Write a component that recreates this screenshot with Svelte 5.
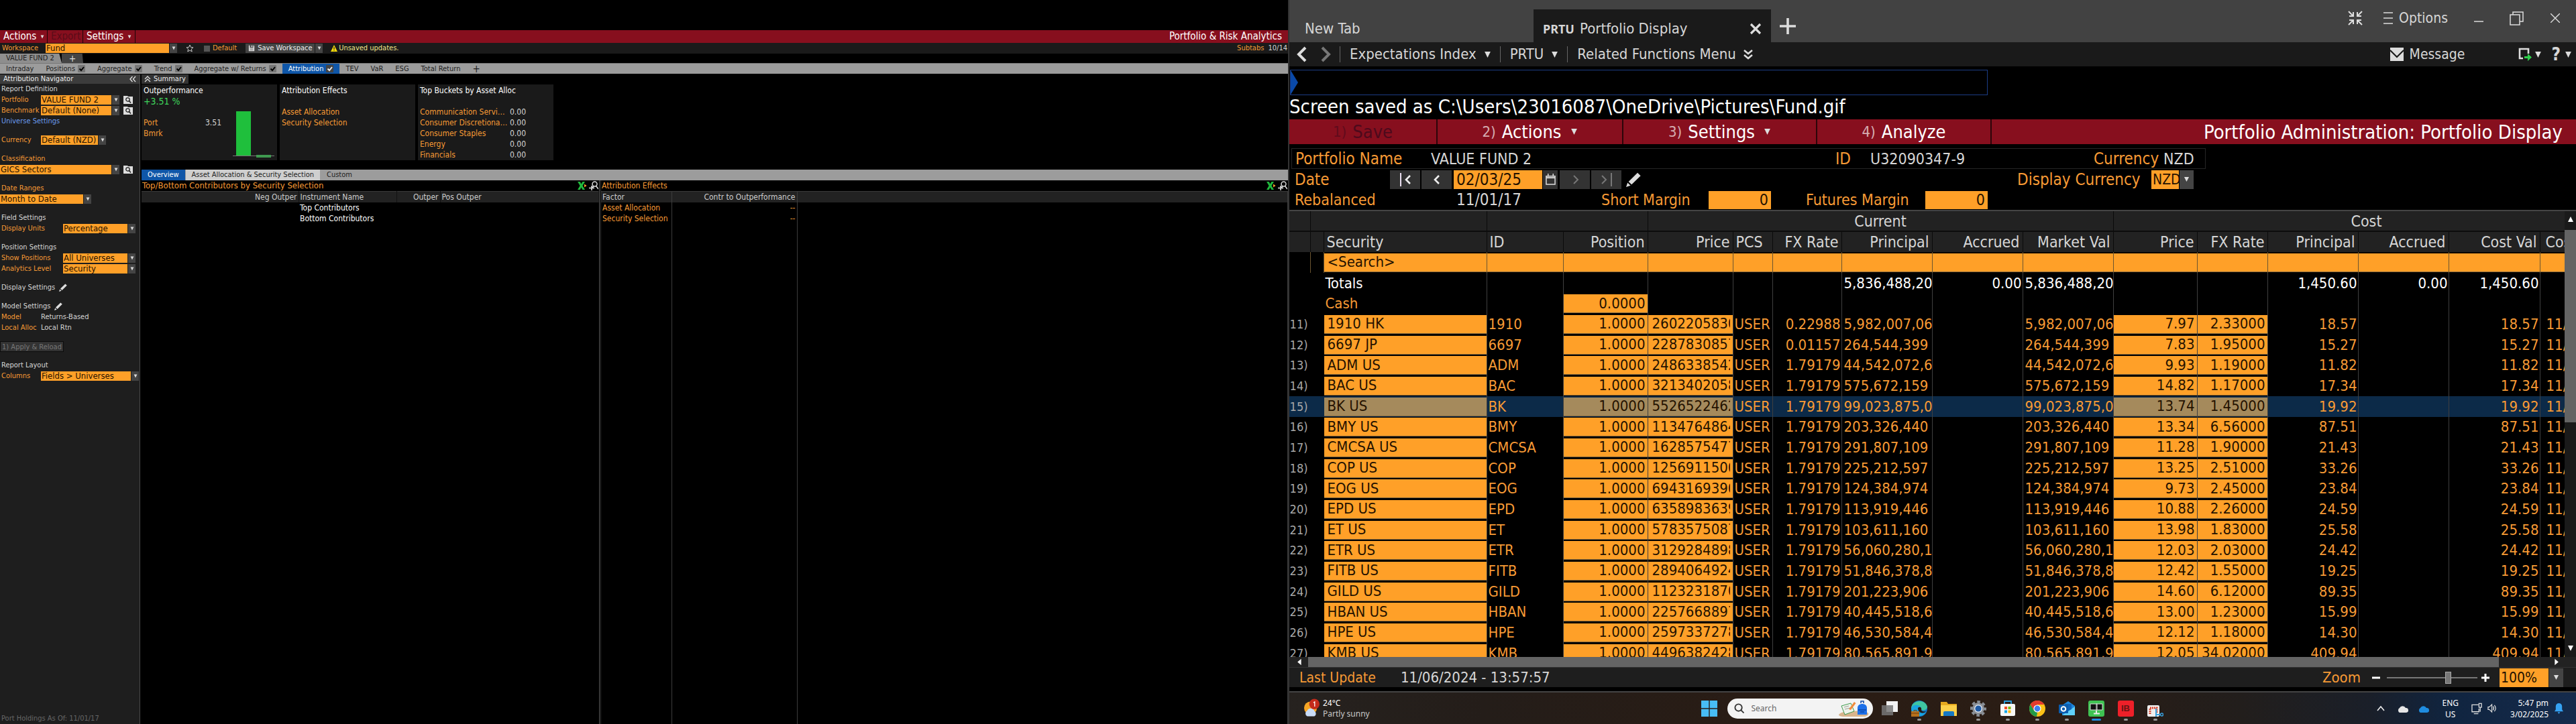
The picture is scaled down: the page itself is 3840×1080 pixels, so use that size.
<script>
  const subtabs = [
    { name: 'Positions', check: true }, { name: 'Aggregate', check: true }, { name: 'Trend', check: true },
    { name: 'Aggregate w/ Returns', check: true }, { name: 'Attribution', check: true, active: true },
    { name: 'TEV' }, { name: 'VaR' }, { name: 'ESG' }, { name: 'Total Return' }
  ];
  const buckets = ['Communication Servi…', 'Consumer Discretiona…', 'Consumer Staples', 'Energy', 'Financials'];
  const columns = [
    ['', 31], ['', 20], ['Security', 243, 'l'], ['ID', 114, 'l'], ['Position', 126], ['Price', 127], ['PCS', 59, 'l'],
    ['FX Rate', 103], ['Principal', 135], ['Accrued', 135], ['Market Val', 135], ['Price', 125], ['FX Rate', 105],
    ['Principal', 135], ['Accrued', 135], ['Cost Val', 136], ['Cos', 37, 'l']
  ];
  const holdings = [
    ['1910 HK', '1910', '2602205830', '0.22988', '5,982,007,06', '7.97', '2.33000', '18.57'],
    ['6697 JP', '6697', '2287830857', '0.01157', '264,544,399', '7.83', '1.95000', '15.27'],
    ['ADM US', 'ADM', '2486338542', '1.79179', '44,542,072,6', '9.93', '1.19000', '11.82'],
    ['BAC US', 'BAC', '3213402058', '1.79179', '575,672,159', '14.82', '1.17000', '17.34'],
    ['BK US', 'BK', '5526522462', '1.79179', '99,023,875,0', '13.74', '1.45000', '19.92'],
    ['BMY US', 'BMY', '1134764864', '1.79179', '203,326,440', '13.34', '6.56000', '87.51'],
    ['CMCSA US', 'CMCSA', '1628575477', '1.79179', '291,807,109', '11.28', '1.90000', '21.43'],
    ['COP US', 'COP', '1256911500', '1.79179', '225,212,597', '13.25', '2.51000', '33.26'],
    ['EOG US', 'EOG', '6943169390', '1.79179', '124,384,974', '9.73', '2.45000', '23.84'],
    ['EPD US', 'EPD', '6358983639', '1.79179', '113,919,446', '10.88', '2.26000', '24.59'],
    ['ET US', 'ET', '5783575087', '1.79179', '103,611,160', '13.98', '1.83000', '25.58'],
    ['ETR US', 'ETR', '3129284898', '1.79179', '56,060,280,1', '12.03', '2.03000', '24.42'],
    ['FITB US', 'FITB', '2894064924', '1.79179', '51,846,378,8', '12.42', '1.55000', '19.25'],
    ['GILD US', 'GILD', '1123231870', '1.79179', '201,223,906', '14.60', '6.12000', '89.35'],
    ['HBAN US', 'HBAN', '2257668897', '1.79179', '40,445,518,6', '13.00', '1.23000', '15.99'],
    ['HPE US', 'HPE', '2597337278', '1.79179', '46,530,584,4', '12.12', '1.18000', '14.30'],
    ['KMB US', 'KMB', '4496382428', '1.79179', '80,565,891,9', '12.05', '34.02000', '409.94']
  ];
</script>

{#snippet tri(big)}<svg class="tri" class:big viewBox="0 0 10 10" aria-hidden="true"><path d="M1 1h8L5 9z" /></svg>{/snippet}
{#snippet drop()}<span class="drop" aria-hidden="true">{@render tri(false)}</span>{/snippet}
{#snippet combo(id, value, size)}<span class="combo {size}"><select {id} aria-label={value}><option>{value}</option></select>{@render drop()}</span>{/snippet}
{#snippet find()}<button class="ico find" aria-label="Browse"><svg viewBox="0 0 14 12"><path d="M0 0h6l1 1h7v11H0z" fill="#ddd" /><circle cx="6.5" cy="5.5" r="2.7" fill="none" stroke="#222" stroke-width="1.3" /><path d="M8.5 7.5 11 10.5" stroke="#222" stroke-width="1.6" /></svg></button>{/snippet}
{#snippet pencil()}<button class="ico pen" aria-label="Edit"><svg viewBox="0 0 12 12"><path d="M0 12 1.2 8.4 3.6 10.8zM2 7.6 9.3.4 11.8 2.8 4.5 10z" fill="#ddd" /></svg></button>{/snippet}
{#snippet gridtools()}<button class="ico tool" aria-label="Export to spreadsheet"><svg viewBox="0 0 14 14"><path d="M0 1h3.600L5.500 4.500 7.400 1H11L7.400 7 11 13H7.400L5.500 9.500 3.600 13H0l3.600-6z" fill="#20b83c" /><path d="M10 4.500 13.500 7 10 9.500z" fill="#f79a2e" /></svg></button><button class="ico tool" aria-label="Zoom in"><svg viewBox="0 0 14 14"><circle cx="8.500" cy="4.500" r="3.500" fill="none" stroke="#ddd" stroke-width="1.500" /><path d="M10.500 7.500 14 12M7 8 5 9.500M4 7v7M0 10.500h8" fill="none" stroke="#ddd" stroke-width="1.600" /></svg></button>{/snippet}

<main>
  <section class="risk" aria-label="Portfolio and Risk Analytics">
    <header class="menu">
      <button class="m1">Actions {@render tri(false)}</button><button class="m2" disabled>Export</button><button class="m3">Settings {@render tri(false)}</button>
      <h1>Portfolio &amp; Risk Analytics</h1>
    </header>
    <div class="toolbar">
      <label for="ws">Workspace</label>{@render combo('ws', 'Fund', 'w-ws')}
      <button class="ico star" aria-label="Favourite"><svg viewBox="0 0 12 12"><path d="M6 1 7.500 4.500 11 4.800 8.300 7.200 9.200 11 6 9 2.800 11 3.700 7.200 1 4.800 4.500 4.500z" fill="none" stroke="#ccc" /></svg></button>
      <label class="default"><input type="checkbox" />Default</label>
      <button class="save"><svg viewBox="0 0 12 12" aria-hidden="true"><path d="M1 1h2v4h6V1h1l1 1v9H1z" fill="#ddd" /><path d="M5 1h3v3H5zM3 7h6M3 9h6" fill="#ddd" stroke="#444" stroke-width=".6" /></svg>Save Workspace</button>{@render drop()}
      <span class="warn"><svg viewBox="0 0 12 12" aria-hidden="true"><path d="M6 0 12 12H0z" fill="#f5d90a" /><path d="M6 4v4M6 9.200v1.400" stroke="#222" stroke-width="1.500" /></svg>Unsaved updates.</span>
      <span class="count"><b>Subtabs</b> 10/14</span>
    </div>
    <div class="filetabs"><button class="ft">VALUE FUND 2</button><button class="ft add" aria-label="Add tab">+</button></div>
    <nav class="subtabs">
      <button>Intraday</button>
      {#each subtabs as t}
        <button class:active={t.active}>{t.name}{#if t.check}<svg class="chk" viewBox="0 0 11 11" aria-hidden="true"><rect width="11" height="11" rx="1" fill={t.active ? '#444' : '#777'} /><path d="M2.500 5.500 5 8l4-5" fill="none" stroke={t.active ? '#eee' : '#000'} stroke-width="2" /></svg>{/if}</button>
      {/each}
      <button class="plus" aria-label="Add subtab">+</button>
    </nav>

    <div class="body">
      <aside>
        <h2>Attribution Navigator<button class="ico fold" aria-label="Collapse"><svg viewBox="0 0 10 10"><path d="M4.500 1 1 5l3.500 4M9 1 5.500 5 9 9" fill="none" stroke="#ddd" stroke-width="1.400" /></svg></button></h2>
        <div class="sections">
          <div>
            <p class="pale">Report Definition</p>
            <p><label class="k" for="pf">Portfolio</label>{@render combo('pf', 'VALUE FUND 2', 'w-m')}{@render find()}</p>
            <p><label class="k" for="bm">Benchmark</label>{@render combo('bm', 'Default (None)', 'w-m')}{@render find()}</p>
            <p><a href="#universe">Universe Settings</a></p>
          </div>
          <div><p><label class="k" for="cur">Currency</label>{@render combo('cur', 'Default (NZD)', 'w-s')}</p></div>
          <div><p><label for="cls">Classification</label></p><p class="edge">{@render combo('cls', 'GICS Sectors', 'w-l')}{@render find()}</p></div>
          <div><p><label for="dr">Date Ranges</label></p><p class="edge">{@render combo('dr', 'Month to Date', 'w-d')}</p></div>
          <div><p class="pale">Field Settings</p><p><label class="k wide" for="du">Display Units</label>{@render combo('du', 'Percentage', 'w-p')}</p></div>
          <div>
            <p class="pale">Position Settings</p>
            <p><label class="k wide" for="sp">Show Positions</label>{@render combo('sp', 'All Universes', 'w-p')}</p>
            <p><label class="k wide" for="al">Analytics Level</label>{@render combo('al', 'Security', 'w-p')}</p>
          </div>
          <div><p class="pale">Display Settings {@render pencil()}</p></div>
          <div>
            <p class="pale">Model Settings {@render pencil()}</p>
            <p><span class="k">Model</span><span class="pale">Returns-Based</span></p>
            <p><span class="k">Local Alloc</span><span class="pale">Local Rtn</span></p>
          </div>
          <div><button class="apply" disabled>1) Apply &amp; Reload</button></div>
          <div><p class="pale">Report Layout</p><p><label class="k" for="co">Columns</label>{@render combo('co', 'Fields > Universes', 'w-c')}</p></div>
        </div>
        <p class="asof">Port Holdings As Of: 11/01/17</p>
      </aside>

      <div class="report">
        <button class="sumtab"><svg viewBox="0 0 10 10" aria-hidden="true"><path d="M1 5 5 1l4 4M1 9l4-4 4 4" fill="none" stroke="#ddd" stroke-width="1.300" /></svg>Summary</button>
        <div class="cards">
          <article>
            <div class="perf"><h3>Outperformance</h3><p class="gain">+3.51 %</p><dl><dt>Port</dt><dd>3.51</dd><dt>Bmrk</dt><dd></dd></dl></div>
            <svg class="bars" viewBox="0 0 64 76" aria-hidden="true"><path d="M1 70.500h62" stroke="#777" /><path d="M6 4h22v66H6z" fill="#1fbf3c" /><path d="M36 69h22v4H36z" fill="#3f9a50" /></svg>
          </article>
          <article><div><h3>Attribution Effects</h3><p></p><p>Asset Allocation</p><p>Security Selection</p></div></article>
          <article><div><h3>Top Buckets by Asset Alloc</h3><p></p><dl class="bk">{#each buckets as b}<dt>{b}</dt><dd>0.00</dd>{/each}</dl></div></article>
        </div>
        <nav class="views"><button class="active">Overview</button><button class="light">Asset Allocation &amp; Security Selection</button><button>Custom</button></nav>
        <div class="grids">
          <div class="contrib">
            <div class="gt"><h3>Top/Bottom Contributors by Security Selection</h3>{@render gridtools()}</div>
            <table class="small">
              <colgroup><col class="c1" /><col class="c2" /><col class="c3" /><col /></colgroup>
              <thead><tr><th class="r">Neg Outper</th><th>Instrument Name</th><th class="r">Outper</th><th>Pos Outper</th></tr></thead>
              <tbody><tr><td></td><td>Top Contributors</td><td></td><td></td></tr><tr><td></td><td>Bottom Contributors</td><td></td><td></td></tr></tbody>
            </table>
          </div>
          <div class="effects">
            <div class="gt"><h3>Attribution Effects</h3>{@render gridtools()}</div>
            <table class="small lined">
              <colgroup><col class="c4" /><col class="c5" /><col /></colgroup>
              <thead><tr><th>Factor</th><th class="r">Contr to Outperformance</th><th></th></tr></thead>
              <tbody><tr><td>Asset Allocation</td><td class="r">--</td><td></td></tr><tr><td>Security Selection</td><td class="r">--</td><td></td></tr><tr class="fill"><td></td><td></td><td></td></tr></tbody>
            </table>
          </div>
        </div>
      </div>
    </div>
  </section>

  <section class="display" aria-label="Portfolio Display">
    <header class="titlebar">
      <button class="tab plain">New Tab</button>
      <button class="tab on"><b>PRTU</b><span>Portfolio Display</span><svg viewBox="0 0 18 18" aria-hidden="true"><path d="M2 2 16 16M16 2 2 16" stroke="#ddd" stroke-width="3.200" /></svg></button>
      <button class="ico newtab" aria-label="New tab"><svg viewBox="0 0 24 24"><path d="M12 0v24M0 12h24" stroke="#ddd" stroke-width="3.600" /></svg></button>
      <div class="win">
        <button class="ico" aria-label="Shrink"><svg class="s22" viewBox="0 0 22 22"><path d="M1 1 7 7M8 2v6H2M21 1 15 7M14 2v6h6M1 21 7 15M2 14h6v6M21 21 15 15M20 14h-6v6" fill="none" stroke="#ddd" stroke-width="2" /></svg></button>
        <button class="opt"><svg viewBox="0 0 14 20" aria-hidden="true"><path d="M0 2h14M0 10h14M0 18h14" stroke="#ddd" stroke-width="1.600" /></svg>Options</button>
        <button class="ico" aria-label="Minimize"><svg class="s14" viewBox="0 0 14 14"><path d="M0 12h14" stroke="#ddd" stroke-width="1.500" /></svg></button>
        <button class="ico" aria-label="Restore"><svg class="s22" viewBox="0 0 22 22"><path d="M1 6h14v15H1zM5 6V2h15v14h-5" fill="none" stroke="#ddd" stroke-width="1.500" /></svg></button>
        <button class="ico" aria-label="Close"><svg class="s14" viewBox="0 0 14 14"><path d="M0 0 14 14M14 0 0 14" stroke="#ddd" stroke-width="1.400" /></svg></button>
      </div>
    </header>
    <nav class="navbar">
      <button class="ico" aria-label="Back"><svg class="chev" viewBox="0 0 16 24"><path d="M14 2 4 12 14 22" fill="none" stroke="#ddd" stroke-width="4" /></svg></button>
      <button class="ico fwd" aria-label="Forward"><svg class="chev" viewBox="0 0 16 24"><path d="M2 2 12 12 2 22" fill="none" stroke="#777" stroke-width="4" /></svg></button>
      <button class="seg">Expectations Index {@render tri(true)}</button>
      <button class="seg">PRTU {@render tri(true)}</button>
      <button class="seg">Related Functions Menu <svg class="dbl" viewBox="0 0 14 16" aria-hidden="true"><path d="M1 2 7 7l6-5M1 9l6 5 6-5" fill="none" stroke="#ddd" stroke-width="2.500" /></svg></button>
      <button class="msg"><svg viewBox="0 0 20 20" aria-hidden="true"><path d="M0 0h20v20H0z" fill="#ddd" /><path d="M0 4 10 14 20 4" fill="none" stroke="#1a1a1a" stroke-width="2" /></svg>Message</button>
      <button class="ico exp" aria-label="Export"><svg viewBox="0 0 20 20"><path d="M7 16H2V2h13v7" fill="none" stroke="#ddd" stroke-width="2.600" /><path d="M9 13h5V9l6 5.500L14 20v-4H9z" fill="#2fd04c" /></svg>{@render tri(true)}</button>
      <button class="help" aria-label="Help"><b>?</b>{@render tri(true)}</button>
    </nav>
    <div class="cmd"><svg viewBox="0 0 11 38" preserveAspectRatio="none" aria-hidden="true"><path d="M0 0 11 19 0 38z" fill="#0a49a8" /></svg><input aria-label="Command" /></div>
    <p class="notice">Screen saved as C:\Users\23016087\OneDrive\Pictures\Fund.gif</p>
    <div class="redbar">
      <button class="b1" disabled><i>1)</i>Save</button><button class="b2"><i>2)</i>Actions {@render tri(true)}</button><button class="b3"><i>3)</i>Settings {@render tri(true)}</button><button class="b4"><i>4)</i>Analyze</button>
      <h1>Portfolio Administration: Portfolio Display</h1>
    </div>

    <div class="form">
      <div class="fr boxed"><span class="f1">Portfolio Name</span><output class="f2">VALUE FUND 2</output><span class="f3">ID</span><output class="f4">U32090347-9</output><span class="f5">Currency</span><output>NZD</output></div>
      <div class="fr">
        <label class="g1" for="date">Date</label>
        <button class="step" aria-label="First"><svg viewBox="0 0 20 20"><path d="M3 0v20" stroke="#eadff0" stroke-width="2" /><path d="M17 4 11 10l6 6" fill="none" stroke="#eee" stroke-width="2.600" /></svg></button>
        <button class="step" aria-label="Previous"><svg viewBox="0 0 20 20"><path d="M13 4 7 10l6 6" fill="none" stroke="#eee" stroke-width="2.600" /></svg></button>
        <span class="date"><input id="date" value="02/03/25" /><button class="cal" aria-label="Calendar"><svg viewBox="0 0 16 18"><path d="M1 4h14v13H1zM4 0v5M12 0v5" fill="none" stroke="#ddd" stroke-width="1.600" /><path d="M1 6.500h14" stroke="#ddd" stroke-width="2" /></svg></button></span>
        <button class="step" aria-label="Next"><svg viewBox="0 0 20 20"><path d="M8 4 14 10 8 16" fill="none" stroke="#777" stroke-width="2" /></svg></button>
        <button class="step" aria-label="Last"><svg viewBox="0 0 20 20"><path d="M3 4 9 10 3 16M17 0v20" fill="none" stroke="#777" stroke-width="2" /></svg></button>
        <button class="ico edit" aria-label="Edit date"><svg viewBox="0 0 12 12"><path d="M0 12 1.200 8.400 3.600 10.800zM2 7.600 9.300.4 11.800 2.800 4.500 10z" fill="#ddd" /></svg></button>
        <label class="dc" for="dcur">Display Currency</label>
        <span class="bigsel nzd"><select id="dcur"><option>NZD</option></select><span class="bigdrop">{@render tri(false)}</span></span>
      </div>
      <div class="fr">
        <span class="g2">Rebalanced</span><output class="g3">11/01/17</output>
        <label class="g4" for="sm">Short Margin</label><input class="mar" id="sm" value="0" />
        <label class="g5" for="fm">Futures Margin</label><input class="mar" id="fm" value="0" />
      </div>
    </div>

    <div class="holdwrap">
      <div class="clip">
        <table class="hold">
          <colgroup>{#each columns as c}<col style="width:{c[1]}px" />{/each}</colgroup>
          <thead>
            <tr class="grp"><th></th><th colspan="2"></th><th colspan="2"></th><th colspan="6">Current</th><th class="cost" colspan="6">Cost</th></tr>
            <tr>{#each columns as c}<th class={c[2]}>{c[0]}</th>{/each}</tr>
          </thead>
          <tbody>
            <tr class="search"><td></td><td></td>{#each columns.slice(2) as c, i}<td><input aria-label="Filter {c[0]}" value={i === 0 ? '<Search>' : ''} /></td>{/each}</tr>
            <tr class="tot"><td></td><td></td><td class="l">Totals</td><td></td><td></td><td></td><td></td><td></td><td class="cut">5,836,488,20</td><td>0.00</td><td class="cut">5,836,488,20</td><td></td><td></td><td>1,450.60</td><td>0.00</td><td>1,450.60</td><td></td></tr>
            <tr><td></td><td></td><td class="l">Cash</td><td></td><td class="e"><input aria-label="Cash position" value="0.0000" /></td><td></td><td></td><td></td><td></td><td></td><td></td><td></td><td></td><td></td><td></td><td></td><td></td></tr>
            {#each holdings as h, i}
              <tr class:sel={i === 4}>
                <td class="n">{i + 11})</td><td></td>
                <td class="e sec"><input aria-label="Security" value={h[0]} /></td><td class="l">{h[1]}</td>
                <td class="e"><input aria-label="Position" value="1.0000" /></td><td class="e pr"><input aria-label="Price" value={h[2]} /></td>
                <td class="l">USER</td><td>{h[3]}</td><td class="cut">{h[4]}</td><td></td><td class="cut">{h[4]}</td>
                <td class="e"><input aria-label="Cost price" value={h[5]} /></td><td class="e"><input aria-label="Cost FX rate" value={h[6]} /></td>
                <td>{h[7]}</td><td></td><td>{h[7]}</td><td class="last">11/</td>
              </tr>
            {/each}
          </tbody>
        </table>
      </div>
      <div class="vbar" aria-hidden="true"><svg viewBox="0 0 10 10"><path d="M5 1 9 9H1z" fill="#fff" /></svg><span></span><svg viewBox="0 0 10 10"><path d="M1 1h8L5 9z" fill="#fff" /></svg></div>
    </div>
    <div class="hbar" aria-hidden="true"><svg viewBox="0 0 10 14"><path d="M9 1v12L2 7z" fill="#fff" /></svg><span></span><svg viewBox="0 0 10 14"><path d="M1 1v12l7-6z" fill="#fff" /></svg></div>
    <footer class="status">
      <span class="lu">Last Update</span><output>11/06/2024 - 13:57:57</output>
      <label class="zl" for="zoom">Zoom</label>
      <button class="ico" aria-label="Zoom out"><svg class="s12" viewBox="0 0 12 12"><path d="M0 6h12" stroke="#fff" stroke-width="3" /></svg></button>
      <input id="zoom" type="range" min="0" max="100" value="69" />
      <button class="ico" aria-label="Zoom in"><svg class="s12" viewBox="0 0 12 12"><path d="M0 6h12M6 0v12" stroke="#fff" stroke-width="3" /></svg></button>
      <span class="bigsel pct"><select aria-label="Zoom level"><option>100%</option></select><span class="bigdrop">{@render tri(false)}</span></span>
    </footer>

    <div class="taskbar">
      <button class="weather">
        <svg viewBox="0 0 26 30" aria-hidden="true"><circle cx="12" cy="14" r="10" fill="#f5a524" /><path d="M7 27a5 5 0 0 1 0-9 6 6 0 0 1 11 1 4.500 4.500 0 0 1 0 8z" fill="#c9dcf7" /><circle cx="18" cy="8" r="8" fill="#c42b1c" /><path d="M16.500 6 18.500 4.500V12" fill="none" stroke="#fff" stroke-width="1.300" /></svg>
        <span>24°C<br /><em>Partly sunny</em></span>
      </button>
      <div class="apps">
        <button class="ico" aria-label="Start"><svg viewBox="0 0 24 24"><path d="M0 0h11.300v11.300H0zM12.700 0H24v11.300H12.700zM0 12.700h11.300V24H0zM12.700 12.700H24V24H12.700z" fill="#48bdf5" /></svg></button>
        <label class="find-box">
          <svg class="mag" viewBox="0 0 16 16" aria-hidden="true"><circle cx="7" cy="7" r="5.500" fill="none" stroke="#333" stroke-width="2" /><path d="M11 11 15.500 15.500" stroke="#333" stroke-width="2" /></svg>
          <input placeholder="Search" aria-label="Search" />
          <svg class="art" viewBox="0 0 46 26" aria-hidden="true"><path d="M0 22c4-5 12-4 20-5 10-1 20-2 24 3 1 2-1 4-5 5H8c-5 0-8-1-8-3z" fill="#d8b48c" /><path d="M4 9 18 5l5 12-14 5z" fill="#eef3ea" stroke="#3f9a50" /><path d="M8 11 15 9M9 14l8-2" stroke="#999" /><path d="M15 14 23 3l2.500 2L18 15z" fill="#f08a3c" /><path d="M28 12c0-8 14-8 14 0v10H28z" fill="#1c6fe8" /><path d="M33 5V2h4v3M29 15h12M32 18h6" fill="none" stroke="#0b48ab" stroke-width="1.500" /></svg>
        </label>
        <button class="ico" aria-label="Task view"><svg viewBox="0 0 24 24"><path d="M7 1h17v16H7z" fill="#f2f2f2" /><path d="M0 7h17v15H0z" fill="#777" opacity=".85" /></svg></button>
        <button class="ico run" aria-label="Edge"><svg viewBox="0 0 24 24"><circle cx="12" cy="12" r="12" fill="#1478c8" /><path d="M0 12C0 0 20-4 24 9c0 6-8 7-9 4 1-5-9-7-15-1z" fill="#3fc6a0" /><path d="M0 12C2 5 12 5 14 10c-5 0-6 8 2 9l6-1c-7 9-22 6-22-6z" fill="#1aa4e0" /><path d="M10 11c3-3 6 0 5 3 0 2 4 3 7 2-4 5-12 2-12-5z" fill="#241a14" /><path d="M0 16h12v8H0z" fill="#b8701c" /><path d="M0 19h12M4 16v-1.500h4V16" fill="none" stroke="#704010" /></svg></button>
        <button class="ico" aria-label="Files"><svg viewBox="0 0 24 24"><path d="M0 2h9l2 3h13v18H0z" fill="#e5a81e" /><path d="M0 7h24v16H0z" fill="#fbd04a" /><path d="M4 23v-5q0-2 2-2h12q2 0 2 2v5z" fill="#1579c4" /></svg></button>
        <button class="ico run" aria-label="Settings"><svg viewBox="0 0 24 24"><circle cx="12" cy="12" r="9" fill="#8a8f96" /><circle cx="12" cy="12" r="10" fill="none" stroke="#8a8f96" stroke-width="4" stroke-dasharray="4.500 3.354" stroke-dashoffset="2" /><circle cx="12" cy="12" r="6" fill="#dfe5ee" /><circle cx="12" cy="12" r="4.600" fill="#1f5aa5" /></svg></button>
        <button class="ico run" aria-label="Store"><svg viewBox="0 0 24 24"><path d="M7 6V1h10v5" fill="none" stroke="#2a9fe0" stroke-width="1.800" /><rect y="5" x="1" width="22" height="18" rx="2" fill="#f6f6f6" /><path d="M7 9h4v4H7z" fill="#f04e23" /><path d="M12.500 9h4v4h-4z" fill="#80bb0a" /><path d="M7 14.500h4v4H7z" fill="#0ea5e9" /><path d="M12.500 14.500h4v4h-4z" fill="#fbb606" /></svg></button>
        <button class="ico run" aria-label="Chrome"><svg viewBox="0 0 24 24"><circle cx="12" cy="12" r="12" fill="#fbc116" /><path d="M1.600 6A12 12 0 0 1 22.400 6H12l-5 9z" fill="#e33b2e" /><path d="M1.600 6 7 15l5 3-1 6A12 12 0 0 1 1.600 6z" fill="#219a48" /><circle cx="12" cy="12" r="5.600" fill="#fff" /><circle cx="12" cy="12" r="4.400" fill="#3e7ef0" /></svg></button>
        <button class="ico run" aria-label="Outlook"><svg viewBox="0 0 24 24"><path d="M5 7 14 1l10 7v14H5z" fill="#1b86dc" /><path d="M5 22 24 9v13z" fill="#5fd0fa" /><path d="M9 5h10v8l-6 3z" fill="#0f63b8" /><rect y="6" width="14" height="13" rx="1" fill="#0b5cad" /><circle cx="7" cy="12.500" r="3.300" fill="none" stroke="#fff" stroke-width="2" /></svg></button>
        <button class="ico now" aria-label="Terminal"><svg viewBox="0 0 24 24"><rect width="24" height="24" rx="3" fill="#3fc252" /><path d="M3 5h10v9H3zM12 5h9v9h-9z" fill="#111" stroke="#ddd" /><path d="M12 15v4M8 19.500h9" stroke="#eee" stroke-width="2" /></svg></button>
        <button class="ico run ib" aria-label="IB">IB</button>
        <button class="ico run" aria-label="Snipping Tool"><svg viewBox="0 0 24 24"><rect y="7" width="18" height="17" rx="2" fill="#eee" /><path d="M4 20v-9h10v7" fill="none" stroke="#d8432b" stroke-width="3" stroke-dasharray="2 1" /><path d="M13 12v12M12 21h8" stroke="#3aa0dd" stroke-width="2" /><circle cx="21.500" cy="21" r="2" fill="none" stroke="#3aa0dd" stroke-width="1.500" /></svg></button>
      </div>
      <div class="tray">
        <svg class="t12" viewBox="0 0 12 12" aria-hidden="true"><path d="M1 9 6 3l5 6" fill="none" stroke="#eee" stroke-width="1.600" /></svg>
        <svg class="t18" viewBox="0 0 18 12" aria-hidden="true"><path d="M4 12a4 4 0 0 1 0-7 5 5 0 0 1 9 0 3.500 3.500 0 0 1 1 7z" fill="#e6e6e6" /></svg>
        <svg class="t18" viewBox="0 0 18 12" aria-hidden="true"><path d="M4 12a4 4 0 0 1 0-7 5 5 0 0 1 9 0 3.500 3.500 0 0 1 1 7z" fill="#1f8de0" /></svg>
        <span class="lang">ENG<br />US</span>
        <svg class="t18 mon" viewBox="0 0 18 18" aria-hidden="true"><path d="M11 3H1v11h11V9M4 17h7M12 1h4v6h-4zM14 7v7" fill="none" stroke="#ddd" stroke-width="1.400" /></svg>
        <svg class="t16" viewBox="0 0 16 16" aria-hidden="true"><path d="M1 6h2l4-4v12l-4-4H1zM9 5q2 3 0 6M11 3q4 5 0 10" fill="none" stroke="#ddd" stroke-width="1.300" /></svg>
        <span class="clock">5:47 pm<br />3/02/2025</span>
        <svg class="t16" viewBox="0 0 16 18" aria-hidden="true"><path d="M8 1a5 5 0 0 1 5 5v5l2 3H1l2-3V6a5 5 0 0 1 5-5zM6 15h4l-2 3z" fill="#35a2f3" /></svg>
      </div>
    </div>
  </section>
</main>

<style>
  :global(body) { background: #000; }
  main { --o: #ffa028; --t: #f79a35; --p: #d6d6d6; display: grid; grid-template: minmax(0, 1fr) / minmax(0, 1fr) minmax(0, 1fr); height: 100vh; overflow: hidden; color: var(--p); font-family: "DejaVu Sans Condensed", "DejaVu Sans", sans-serif; }
  * { box-sizing: border-box; }
  button, input, select { font: inherit; color: inherit; border: 0; margin: 0; padding: 0; background: none; border-radius: 0; min-width: 0; white-space: nowrap; }
  select { appearance: none; }
  h1, h2, h3, p, dl, dd { margin: 0; font-weight: 400; font-size: inherit; }
  .ico { display: flex; align-items: center; justify-content: center; flex: none; }
  .tri { width: 6px; height: 6px; fill: #ddd; flex: none; }
  .tri.big { width: 11px; height: 11px; }
  table { border-collapse: collapse; table-layout: fixed; width: 100%; }
  th { font-weight: 400; }

  /* Risk analytics window */
  .risk { display: flex; flex-direction: column; min-height: 0; padding-top: 45px; font-size: 11px; line-height: 16px; }
  .menu { display: flex; height: 19px; background: #870f1e; color: #fff; font-size: 15px; line-height: 19px; }
  .menu button { display: flex; align-items: center; gap: 6px; border-right: 1px solid #1c0507; padding-left: 5px; }
  .m1 { width: 71px; } .m2 { width: 53px; } .m3 { width: 78px; }
  .menu .m2 { color: #5a0c18; }
  .menu h1 { margin-left: auto; padding-right: 9px; }
  .toolbar { display: flex; align-items: center; height: 16px; padding-left: 3px; background: #1a1a1a; color: var(--t); }
  .toolbar > label:first-child { width: 65px; }
  .combo { display: flex; height: 14px; font-size: 13px; line-height: 14px; }
  .combo select { flex: 1; height: 14px; background: var(--o); color: #241200; padding-left: 1px; }
  .drop { display: flex; flex: none; align-items: center; justify-content: center; width: 11px; height: 14px; margin-left: 1px; background: #444; }
  .w-ws { width: 196px; } .w-m { width: 117px; } .w-s { width: 97px; } .w-l { width: 178px; } .w-d { width: 136px; } .w-p { width: 108px; } .w-c { width: 146px; }
  .star { margin-left: 13px; width: 12px; } .star svg { width: 12px; }
  .default { display: flex; align-items: center; gap: 4px; margin-left: 15px; }
  .default input { appearance: none; width: 9px; height: 9px; background: #555; }
  .save { display: flex; align-items: center; gap: 4px; width: 103px; height: 14px; margin-left: 13px; padding-left: 4px; background: #444; color: #eee; }
  .save svg { width: 10px; }
  .warn { display: flex; align-items: center; gap: 2px; margin-left: 12px; color: #f2e58a; } .warn svg { width: 10px; }
  .count { margin-left: auto; padding-right: 1px; color: var(--p); } .count b { color: var(--t); font-weight: 400; margin-right: 3px; }
  .filetabs { display: flex; height: 14px; line-height: 14px; }
  .ft { width: 92px; background: #8e8e8e; color: #1c1c1c; text-align: left; padding-left: 9px; clip-path: polygon(0 0, 96% 0, 100% 100%, 0 100%); }
  .ft.add { width: 32px; background: #444; color: #ddd; text-align: center; padding: 0; font-size: 14px; }
  .subtabs { display: flex; height: 16px; background: #9c9c9c; color: #1c1c1c; border-top: 1px solid #777; }
  .subtabs button { display: flex; align-items: center; gap: 4px; padding: 0 9px; }
  .chk { width: 11px; height: 11px; }
  button.active { background: #0f56a8; color: #fff; }
  .subtabs .plus { font-size: 15px; }
  .body { flex: 1; display: flex; min-height: 0; padding-top: 1px; }
  aside { display: flex; flex-direction: column; width: 208px; flex: none; background: #1e1e1e; color: var(--t); }
  h2 { display: flex; flex: none; justify-content: space-between; height: 14px; line-height: 14px; padding: 0 5px; background: #3c3c3c; color: #eee; }
  .fold svg { width: 10px; height: 10px; }
  .sections { display: grid; gap: 12px; }
  .sections p { display: flex; align-items: center; height: 16px; padding-left: 2px; white-space: nowrap; }
  .sections p.edge { padding-left: 0; }
  .pale { color: var(--p); }
  .k { width: 59px; flex: none; } .k.wide { width: 92px; }
  a { color: #6a9cf0; text-decoration: none; }
  .find { margin-left: 6px; } .find svg { width: 14px; height: 12px; }
  .pen { margin-left: 6px; } .pen svg { width: 12px; height: 12px; }
  .apply { display: block; width: 95px; height: 16px; background: #333; border: 1px solid #0c0c0c; color: #777; line-height: 13px; }
  .asof { margin-top: auto; padding-left: 2px; color: #666; }
  .report { flex: 1; display: flex; flex-direction: column; min-width: 0; border-left: 1px solid #4a4a4a; padding-left: 2px; }
  .sumtab { display: flex; align-items: center; gap: 4px; width: 70px; height: 14px; padding-left: 4px; background: #333; color: #eee; }
  .sumtab svg { width: 10px; height: 10px; }
  .cards { display: flex; gap: 4px; margin-top: 1px; font-size: 12px; }
  article { display: flex; width: 202px; height: 113px; padding: 1px 3px; background: #1a1a1a; color: var(--t); }
  article > div { flex: 1; } article p { height: 16px; } article h3 { color: #fff; white-space: nowrap; }
  article p.gain { color: #3fd65c; font-size: 14px; }
  dl { display: grid; grid-template-columns: 1fr 40px; } .bk { grid-template-columns: 134px 24px; white-space: nowrap; }
  dt, dd { height: 16px; } dd { color: var(--p); text-align: right; }
  .perf { max-width: 117px; } .perf dl { margin-top: 16px; }
  .bars { width: 64px; height: 76px; margin: 35px 0 0 16px; }
  .views { display: flex; height: 16px; margin-top: 14px; background: #9c9c9c; color: #1c1c1c; }
  .views button { padding: 0 9px; margin-right: 1px; } .views .light { background: #cfcfcf; }
  .grids { flex: 1; display: grid; grid-template-columns: 683px minmax(0, 1fr); min-height: 0; }
  .contrib { border-right: 1px solid #555; }
  .effects { display: flex; flex-direction: column; margin-left: 1px; border-left: 1px solid #333; }
  .gt { display: flex; align-items: center; height: 16px; padding-left: 1px; color: var(--t); font-size: 12px; } .gt h3 { flex: 1; font-size: 13px; }
  .effects h3 { font-size: 12px; }
  .tool { width: 17px; } .tool svg { width: 14px; height: 14px; }
  .small { font-size: 12px; } .small tr { height: 16px; }
  .small th, .small td { padding: 0 2px; text-align: left; white-space: nowrap; line-height: 16px; color: #fff; }
  .small th { background: #222; color: #ccc; border-right: 1px solid #111; border-top: 1px solid #3a3a3a; }
  .small .r { text-align: right; }
  .c1 { width: 234px; } .c2 { width: 146px; } .c3 { width: 65px; } .c4 { width: 105px; } .c5 { width: 187px; }
  .lined { flex: 1; height: 100%; } .lined td, .lined th { border-right: 1px solid #3c3c3c; } .lined td { color: var(--t); }
  .lined .fill { height: auto; }

  /* Portfolio display window */
  .display { display: flex; flex-direction: column; min-height: 0; border-left: 2px solid #333; font-size: 22px; }
  .titlebar { display: flex; height: 63px; flex: none; background: #424242; }
  .tab { padding-top: 22px; line-height: 42px; height: 63px; text-align: left; }
  .plain { width: 364px; padding-left: 23px; }
  .on { display: flex; align-items: center; width: 354px; height: 49px; margin-top: 14px; padding: 8px 14px 0; background: #1a1a1a; }
  .on b { font: 700 18px "Noto Sans", sans-serif; width: 55px; } .on span { flex: 1; } .on svg { width: 18px; height: 18px; }
  .newtab { width: 50px; padding-top: 14px; } .newtab svg { width: 24px; height: 24px; }
  .win { display: flex; align-items: center; gap: 39px; height: 54px; margin-left: auto; padding-right: 24px; }
  .s22 { width: 22px; height: 22px; } .s14 { width: 14px; height: 14px; } .s12 { width: 12px; height: 12px; }
  .opt { display: flex; align-items: center; gap: 9px; font-size: 21px; margin-left: -8px; } .opt svg { width: 14px; height: 20px; }
  .navbar { display: flex; align-items: center; height: 36px; flex: none; padding-left: 10px; background: #1a1a1a; }
  .chev { width: 16px; height: 24px; } .fwd { margin: 0 12px 0 21px; }
  .seg { display: flex; align-items: center; gap: 11px; height: 24px; padding: 0 13px 0 14px; border-left: 1px solid #666; line-height: 24px; }
  .dbl { width: 14px; height: 16px; }
  .msg { display: flex; align-items: center; gap: 9px; margin-left: auto; font-size: 21px; } .msg svg { width: 20px; height: 20px; }
  .exp { gap: 4px; margin-left: 80px; } .exp > svg:first-child { width: 20px; height: 22px; }
  .help { display: flex; align-items: center; gap: 6px; margin: 0 6px 0 14px; font-size: 26px; line-height: 30px; }
  .cmd { display: flex; flex: none; width: 55%; max-width: 1040px; height: 38px; margin: 5px 0 0 1px; border: 1px solid #1b3c84; } .cmd svg { width: 11px; } .cmd input { flex: 1; }
  .notice { flex: none; height: 36px; line-height: 35px; font-size: 29px; color: #fff; white-space: nowrap; }
  .redbar { display: flex; align-items: center; height: 37px; flex: none; background: #870f1e; color: #fff; font-size: 27px; line-height: 34px; }
  .redbar button { display: flex; align-items: center; justify-content: center; gap: 9px; height: 37px; border-right: 2px solid #2c0509; }
  .redbar .tri { margin-left: 4px; } .redbar h1 { margin-left: auto; padding-right: 20px; font-size: 29px; white-space: nowrap; }
  .b1 { width: 221px; } .b2 { width: 277px; } .b3 { width: 289px; } .b4 { width: 260px; } .redbar .b1 { color: #4d0a1c; }
  i { font-size: 22px; font-style: normal; opacity: .65; }
  .form { padding-top: 6px; font-size: 23px; color: var(--t); flex: none; }
  .fr { display: flex; align-items: center; height: 30px; padding-left: 8px; line-height: 28px; white-space: nowrap; }
  .boxed, .boxed + .fr { height: 31px; }
  output { color: var(--p); font-size: 22px; }
  .boxed { max-width: 1363px; margin-left: 3px; padding-left: 5px; border: 1px solid #252525; font-size: 24px; }
  .boxed output { font-size: 23px; }
  .f1 { width: 202px; } .f2 { width: 603px; } .f3 { width: 52px; } .f4 { width: 333px; } .f5 { width: 104px; }
  .g1 { width: 142px; font-size: 24px; }
  .step { display: flex; align-items: center; justify-content: center; width: 45px; height: 28px; margin-right: 2px; background: #333; } .step svg { width: 20px; height: 20px; }
  .date { display: flex; width: 155px; height: 28px; margin: 0 3px 0 1px; } .date input { flex: 1; background: var(--o); color: #241200; padding-left: 4px; font-size: 24px; }
  .cal { display: flex; align-items: center; justify-content: center; width: 22px; margin-left: 1px; background: #333; } .cal svg { width: 15px; height: 17px; }
  .edit { margin-left: 5px; } .edit svg { width: 22px; height: 22px; }
  .dc { margin-left: 561px; width: 200px; font-size: 24px; }
  .bigsel { display: flex; height: 28px; color: #241200; } .bigsel select { flex: 1; background: var(--o); padding-left: 2px; font-size: 21px; }
  .nzd { width: 63px; } .pct { width: 95px; }
  .bigdrop { display: flex; flex: none; align-items: center; justify-content: center; width: 21px; margin-left: 1px; background: #444; } .bigdrop .tri { width: 9px; height: 9px; }
  .g2 { width: 241px; } .g3 { width: 216px; } .g4 { width: 160px; } .g5 { width: 178px; margin-left: 52px; }
  .fr .g3 { font-size: 24px; }
  .mar { width: 93px; height: 27px; background: var(--o); color: #241200; text-align: right; padding-right: 4px; }

  .holdwrap { display: flex; flex: 1; min-height: 0; border-top: 2px solid #444; }
  .clip { flex: 1; min-width: 0; overflow: hidden; }
  .hold th { height: 31px; padding: 0 4px; overflow: hidden; background: #222; border-right: 1px solid #0a0a0a; text-align: right; white-space: nowrap; line-height: 28px; font-size: 23px; }
  .hold .grp th { height: 30px; text-align: center; border-bottom: 2px solid #0c0c0c; } .hold .grp .cost { padding-left: 82px; }
  .hold th.l, .hold td.l { text-align: left; } .hold th:last-child { padding: 0 0 0 8px; }
  .hold tbody tr { height: 31px; } .hold tbody tr:nth-child(3n) { height: 30px; }
  .hold td { padding: 0 1px; overflow: hidden; text-align: right; white-space: nowrap; line-height: 28px; color: var(--t); border-right: 1px solid #3f3f3f; }
  .hold td:nth-child(-n + 2) { border-right-color: #000; }
  .hold td.l { padding-left: 2px; } .hold td.cut { padding: 0 0 0 3px; text-align: left; } .hold td.last { padding: 0 0 0 9px; text-align: left; }
  .hold td.e, .search td { padding: 0; }
  .hold input { display: block; width: 100%; height: 28px; padding: 0 3px; background: var(--o); color: #241200; border-bottom: 1px solid #8a6a3c; text-align: right; text-overflow: clip; }
  .hold .sec input, .hold .search input { text-align: left; padding-left: 5px; } .hold .pr input { padding: 0 4px 0 6px; }
  .hold .search td:nth-child(-n + 2) { background: #000; } .hold tr.search td { border-right-color: #6b5530; }
  .hold .tot td { color: #fff; }
  .hold td.n { padding: 0 3px 0 0; color: #a8a8a8; font-size: 18px; }
  .hold .sel td { background: #0c2a48; } .hold .sel td:nth-child(-n + 2) { border-right-color: #0c2a48; } .hold .sel input { background: #a58a5c; }
  .vbar { display: flex; flex-direction: column; align-items: center; justify-content: space-between; width: 17px; background: #1a1a1a; padding: 7px 0 8px; }
  .vbar svg { width: 10px; height: 10px; } .vbar span { width: 17px; height: 287px; margin: 11px 0 auto; background: #646464; }
  .hbar { display: flex; align-items: center; justify-content: space-between; height: 15px; flex: none; padding: 0 24px 0 10px; background: #222; }
  .hbar svg { width: 9px; height: 11px; } .hbar span { flex: 1; height: 15px; margin: 0 82px 0 9px; background: #646464; }
  .status { display: flex; align-items: center; height: 30px; flex: none; padding: 0 19px 0 15px; background: #1e1e1e; border-top: 1px solid #333; color: var(--t); line-height: 28px; }
  .lu { width: 151px; font-size: 21px; } .zl { margin-left: auto; margin-right: 17px; }
  .status input { appearance: none; width: 135px; height: 20px; margin: 0 6px 0 10px; background: linear-gradient(#777, #777) center / 100% 2px no-repeat; }
  .status input::-webkit-slider-thumb { appearance: none; width: 9px; height: 18px; background: #777; border: 1px solid #aaa; }
  .pct { margin-left: 15px; }

  .taskbar { display: grid; grid-template-columns: 1fr auto 1fr; align-items: center; height: 55px; flex: none; padding-top: 8px; background: linear-gradient(#000 6px, #444 6px, #444 8px, transparent 8px), linear-gradient(90deg, #26221f, #241d19 15%, #2a1c14 40%, #2a1d15 60%, #221e1c 74%, #1a1f29 84%, #10243f 90%, #152b4c); font: 12px/17px "Noto Sans", sans-serif; color: #fff; }
  .weather { display: flex; align-items: center; gap: 5px; padding-left: 20px; text-align: left; line-height: 16px; } .weather svg { width: 25px; height: 30px; } em { font-style: normal; color: #c8c8c8; }
  .apps { display: flex; align-items: center; gap: 20px; margin-right: 2px; }
  .apps > button { position: relative; width: 24px; height: 24px; } .apps > button svg { width: 24px; height: 24px; }
  .apps > .run::after, .now::after { content: ''; position: absolute; top: 27px; left: 9px; width: 6px; height: 3px; border-radius: 2px; background: #999; }
  .apps > .now::after { left: 5px; width: 14px; background: #1f8de0; }
  .apps > .ib { background: #ee2029; border-radius: 3px; color: #651414; font: 700 13px "Liberation Sans", sans-serif; }
  .find-box { display: flex; align-items: center; width: 217px; height: 30px; margin: 0 -7px 0 -5px; padding: 0 5px 0 10px; border-radius: 15px; background: #f3f3f3; }
  .find-box input { flex: 1; margin-left: 11px; color: #333; } .find-box input::placeholder { color: #666; opacity: 1; }
  .mag { width: 15px; height: 15px; } .art { width: 46px; height: 26px; }
  .tray { display: flex; align-items: center; justify-content: flex-end; padding-right: 18px; text-align: center; }
  .t12 { width: 12px; height: 12px; margin-right: 18px; } .t18 { width: 18px; height: 14px; margin-right: 13px; } .t16 { width: 15px; height: 17px; } .t18.mon { width: 17px; height: 18px; margin-right: 7px; }
  .lang { margin: 0 19px 0 5px; } .clock { margin: 0 8px 0 19px; text-align: right; }
</style>
